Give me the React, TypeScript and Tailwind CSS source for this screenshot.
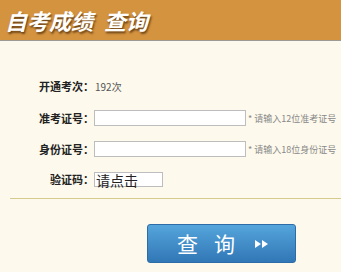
import React from "react";

const font = { fontFamily: '"Noto Sans CJK SC", "Noto Sans", sans-serif' };

function Row({ label, children }: { label: string; children: React.ReactNode }) {
  return (
    <div className="flex items-center">
      <div className="w-[94px] shrink-0 text-right text-[11px] font-bold leading-none text-[#222]">{label}</div>
      {children}
    </div>
  );
}

export default function App() {
  return (
    <div className="h-[272px] w-[341px] overflow-hidden bg-[#fdf9ec]" style={font}>
      <div className="flex h-[40px] items-center gap-[11px] bg-[#d4933f] pl-[5px]">
        <span className="text-[22px] font-bold italic leading-none text-white [text-shadow:1px_2px_2px_rgba(70,40,10,0.75)]">
          自考成绩
        </span>
        <span className="text-[22px] font-bold italic leading-none text-white [text-shadow:1px_2px_2px_rgba(70,40,10,0.75)]">
          查询
        </span>
      </div>
      <div className="h-px bg-[#9c9a94]" />
      <div className="pt-[40px]">
        <div className="h-[16px]">
          <Row label="开通考次：">
            <span className="ml-[1px] text-[10px] leading-none text-[#555]">192次</span>
          </Row>
        </div>
        <div className="mt-[13px] h-[16px]">
          <Row label="准考证号：">
            <div className="h-[16px] w-[152px] border border-[#bdbdbd] bg-white" />
            <span className="ml-[2px] text-[9px] leading-none text-[#888]">* 请输入12位准考证号</span>
          </Row>
        </div>
        <div className="mt-[15px] h-[16px]">
          <Row label="身份证号：">
            <div className="h-[16px] w-[152px] border border-[#bdbdbd] bg-white" />
            <span className="ml-[2px] text-[9px] leading-none text-[#888]">* 请输入18位身份证号</span>
          </Row>
        </div>
        <div className="mt-[15px] h-[15px]">
          <Row label="验证码：">
            <div className="flex h-[15px] w-[69px] items-center border border-[#bdbdbd] bg-white pl-[1px] text-[14px] leading-none text-[#222]">
              请点击
            </div>
          </Row>
        </div>
        <div className="ml-[10px] mt-[11px] h-px bg-[#d6cb8c]" />
        <div className="mt-[25px] pl-[147px]">
          <div className="flex h-[39px] w-[149px] items-center rounded-[3px] border border-[#2c6da8] bg-gradient-to-b from-[#55a5dc] to-[#3177b6] pl-[29px] text-white">
            <span className="text-[21px] leading-none">查</span>
            <span className="ml-[16px] text-[21px] leading-none">询</span>
            <svg className="ml-[20px]" width="14" height="8" viewBox="0 0 14 8">
              <polygon points="0,0 6,4 0,8" fill="white" />
              <polygon points="7,0 13,4 7,8" fill="white" />
            </svg>
          </div>
        </div>
      </div>
    </div>
  );
}
